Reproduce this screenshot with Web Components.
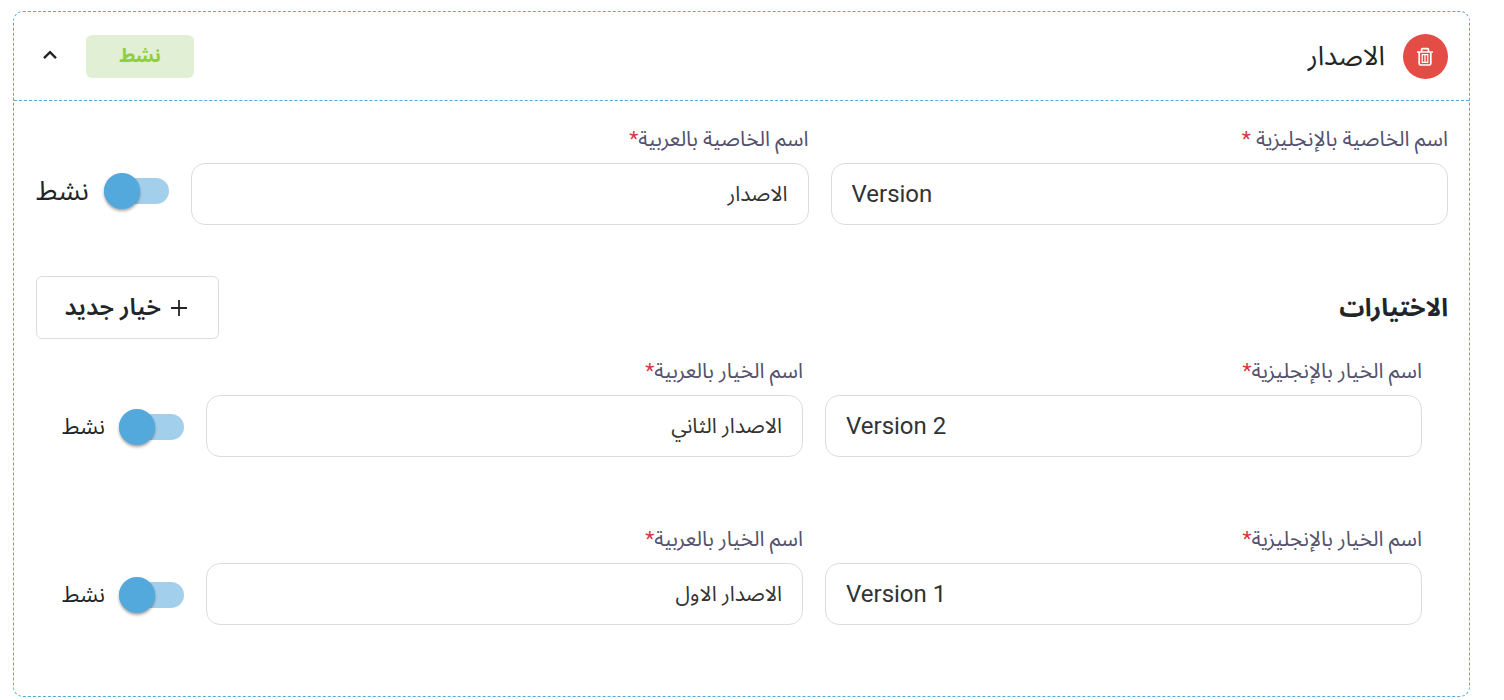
<!DOCTYPE html>
<html lang="ar" dir="rtl">
<head>
<meta charset="utf-8">
<meta name="viewport" content="width=device-width, initial-scale=1">
<title>الاصدار</title>
<style>
body {
    margin: 11px 34px 3px 13px;
    background: #fff;
    color: #212529;
    font-family: Roboto, "Noto Sans Arabic", "DejaVu Sans", sans-serif;
}
</style>
</head>
<body>
<property-card>
    <delete-button slot="start"></delete-button>
    <span slot="title">الاصدار</span>
    <status-badge slot="end">نشط</status-badge>

    <field-row class="property">
        <text-field label="اسم الخاصية بالإنجليزية " value="Version" dir="ltr"></text-field>
        <text-field label="اسم الخاصية بالعربية" value="الاصدار"></text-field>
        <toggle-switch class="large" label="نشط"></toggle-switch>
    </field-row>

    <option-list>
        <span slot="title">الاختيارات</span>
        <field-row>
            <text-field label="اسم الخيار بالإنجليزية" value="Version 2" dir="ltr"></text-field>
            <text-field label="اسم الخيار بالعربية" value="الاصدار الثاني"></text-field>
            <toggle-switch label="نشط"></toggle-switch>
        </field-row>
        <field-row>
            <text-field label="اسم الخيار بالإنجليزية" value="Version 1" dir="ltr"></text-field>
            <text-field label="اسم الخيار بالعربية" value="الاصدار الاول"></text-field>
            <toggle-switch label="نشط"></toggle-switch>
        </field-row>
    </option-list>
</property-card>

<script>
(() => {
    class BaseElement extends HTMLElement {
        constructor() {
            super();
            this.attachShadow({mode: 'open'});
        }

        connectedCallback() {
            if (this.shadowRoot.firstChild) return;
            let template = document.createElement("template");
            template.innerHTML = this.constructor.html;
            this.shadowRoot.appendChild(template.content.cloneNode(true));
            this.ready();
        }

        ready() {}
    }

    class PropertyCard extends BaseElement {
        static html = `
        <style>
        :host {
            display: block;
            border: 1px dashed #53a8dc;
            border-radius: 10px;
        }
        header {
            display: flex;
            align-items: center;
            gap: 18px;
            height: 88px;
            padding: 0 21px 0 22px;
            border-bottom: 1px dashed #53a8dc;
        }
        h2 {
            flex: 1;
            margin: 0;
            font-size: 27px;
            line-height: 40px;
            font-weight: 400;
        }
        .toggle {
            display: flex;
            justify-content: center;
            align-items: center;
            width: 28px;
            height: 28px;
            padding: 0;
            border: 0;
            background: none;
            color: inherit;
            cursor: pointer;
        }
        main {
            padding: 26px 21px 71px 22px;
        }
        main[hidden] {
            display: none;
        }
        </style>
        <header>
            <slot name="start"></slot>
            <h2><slot name="title"></slot></h2>
            <slot name="end"></slot>
            <button class="toggle" type="button" aria-label="طي" aria-expanded="true">
                <svg width="14" height="12" viewBox="0 0 14 12" fill="none" stroke="currentColor" stroke-width="2.4"><path d="M1 8.2 7 2.2 13 8.2"/></svg>
            </button>
        </header>
        <main><slot></slot></main>
        `

        ready() {
            let button = this.shadowRoot.querySelector(".toggle");
            let main = this.shadowRoot.querySelector("main");
            button.addEventListener("click", () => {
                main.hidden = !main.hidden;
                button.setAttribute("aria-expanded", String(!main.hidden));
            });
        }
    }

    class DeleteButton extends BaseElement {
        static html = `
        <style>
        :host {
            display: block;
        }
        button {
            display: flex;
            justify-content: center;
            align-items: center;
            width: 45px;
            height: 45px;
            padding: 0;
            border: 0;
            border-radius: 50%;
            background: #e44d45;
            color: #fff;
            cursor: pointer;
        }
        </style>
        <button type="button" aria-label="حذف">
            <svg width="17" height="19" viewBox="0 0 17 19" fill="none" stroke="currentColor" stroke-width="1.7">
                <path d="M0 5H16M4.6 4.6V2.4Q4.6 1.6 5.4 1.6H10.6Q11.4 1.6 11.4 2.4V4.6M2.2 5V16.4Q2.2 18 3.8 18H12.2Q13.8 18 13.8 16.4V5"/>
                <path d="M5.2 7.7V15.3H10.8V7.7ZM8 7.7V15.3" stroke-width="1.2"/>
            </svg>
        </button>
        `
    }

    class StatusBadge extends BaseElement {
        static html = `
        <style>
        :host {
            display: block;
            box-sizing: border-box;
            width: 108px;
            height: 43px;
            margin-inline-end: 4px;
            border-radius: 6px;
            background: #e1f0d5;
            color: #8fce3c;
            font-size: 19px;
            line-height: 42px;
            font-weight: 700;
            text-align: center;
        }
        </style>
        <slot></slot>
        `
    }

    class FieldRow extends BaseElement {
        static html = `
        <style>
        :host {
            display: grid;
            grid-template-columns: 1fr 1fr 122px;
            align-items: end;
            gap: 22px;
        }
        :host(.property) {
            grid-template-columns: 1fr 1fr 133px;
        }
        </style>
        <slot></slot>
        `
    }

    class TextField extends BaseElement {
        static html = `
        <style>
        :host {
            display: block;
            min-width: 0;
        }
        label {
            display: block;
            margin-bottom: 12px;
            color: #54516c;
            font-size: 21px;
            line-height: 24px;
            white-space: pre;
        }
        label span {
            color: #d3353f;
        }
        input {
            display: block;
            box-sizing: border-box;
            width: 100%;
            height: 62px;
            padding: 0 20px;
            border: 1px solid #dcdcdc;
            border-radius: 14px;
            background: #fff;
            color: #333;
            font-family: inherit;
            font-size: 24px;
        }
        input[dir="rtl"] {
            font-size: 21px;
        }
        </style>
        <label for="field" dir="rtl"></label>
        <input id="field" type="text" required>
        `

        ready() {
            let label = this.shadowRoot.querySelector("label");
            let input = this.shadowRoot.querySelector("input");
            let star = document.createElement("span");
            star.textContent = "*";
            label.append(this.getAttribute("label"), star);
            input.dir = this.getAttribute("dir") || "rtl";
            input.value = this.getAttribute("value") || "";
        }
    }

    class ToggleSwitch extends BaseElement {
        static html = `
        <style>
        :host {
            display: flex;
            justify-content: space-between;
            align-items: center;
            height: 60px;
            font-size: 22px;
        }
        :host(.large) {
            height: 68px;
            font-size: 27px;
        }
        input {
            appearance: none;
            display: flex;
            align-items: center;
            width: 65px;
            height: 26px;
            margin: 0;
            border-radius: 13px;
            background: #d0d0d0;
            cursor: pointer;
        }
        input::before {
            content: "";
            width: 36px;
            height: 36px;
            border-radius: 50%;
            background: #fafafa;
            box-shadow: 0 2px 3px rgba(0, 0, 0, .35);
        }
        input:checked {
            justify-content: flex-end;
            background: #a2cfec;
        }
        input:checked::before {
            background: #53a8dc;
        }
        label {
            line-height: 40px;
        }
        </style>
        <input id="switch" type="checkbox" role="switch" checked>
        <label for="switch"></label>
        `

        ready() {
            this.shadowRoot.querySelector("label").textContent = this.getAttribute("label");
        }
    }

    class OptionList extends BaseElement {
        static html = `
        <style>
        :host {
            display: block;
            margin-top: 51px;
        }
        header {
            display: flex;
            justify-content: space-between;
            align-items: center;
            margin-bottom: 20px;
        }
        h3 {
            margin: 0;
            font-size: 25px;
            line-height: 40px;
            font-weight: 700;
        }
        button {
            display: flex;
            align-items: center;
            gap: 10px;
            width: 183px;
            height: 63px;
            padding: 0 31px;
            border: 1px solid #dcdcdc;
            border-radius: 6px;
            background: #fff;
            color: inherit;
            font-family: inherit;
            font-size: 24px;
            font-weight: 600;
            white-space: nowrap;
            cursor: pointer;
        }
        svg {
            flex: none;
        }
        .options {
            display: grid;
            gap: 70px;
            padding: 0 26px;
        }
        </style>
        <header>
            <h3><slot name="title"></slot></h3>
            <button type="button">
                <svg width="16" height="16" viewBox="0 0 16 16" stroke="currentColor" stroke-width="1.8"><path d="M8 0V16M0 8H16"/></svg>
                خيار جديد
            </button>
        </header>
        <div class="options"><slot></slot></div>
        `
    }

    window.customElements.define("property-card", PropertyCard);
    window.customElements.define("delete-button", DeleteButton);
    window.customElements.define("status-badge", StatusBadge);
    window.customElements.define("field-row", FieldRow);
    window.customElements.define("text-field", TextField);
    window.customElements.define("toggle-switch", ToggleSwitch);
    window.customElements.define("option-list", OptionList);
})();
</script>
</body>
</html>
